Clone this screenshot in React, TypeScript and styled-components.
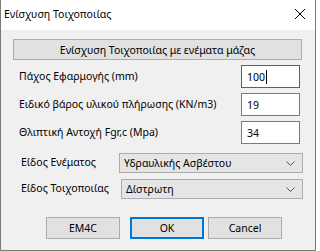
import styled, { createGlobalStyle } from "styled-components";

const GlobalStyle = createGlobalStyle`
    html, body {
        margin: 0;
        padding: 0;
        background: #ffffff;
    }
    * {
        box-sizing: border-box;
    }
`;

const Window = styled.div`
    width: 316px;
    height: 251px;
    display: flex;
    flex-direction: column;
    background: #f0f0f0;
    border: 1px solid #7b7b7b;
    border-top: none;
    font-family: "Noto Sans", "Liberation Sans", sans-serif;
    font-size: 10.5px;
    color: #000;
    overflow: hidden;
`;

const TitleBar = styled.div`
    height: 30px;
    flex: none;
    display: flex;
    align-items: center;
    justify-content: space-between;
    background: #ffffff;
    padding: 0 9px 2px 3px;
`;

const Title = styled.span`
    font-size: 10.5px;
`;

const CloseIcon = styled.svg`
    width: 12px;
    height: 12px;
`;

const WideButton = styled.button`
    margin: 9px 13px 0 12px;
    height: 21px;
    flex: none;
    background: #e1e1e1;
    border: 1px solid #adadad;
    font: inherit;
    color: inherit;
    padding: 0;
`;

const Fields = styled.div`
    display: grid;
    grid-template-columns: 1fr 59px;
    grid-auto-rows: 23px;
    row-gap: 5px;
    align-items: center;
    margin-top: 5px;
    padding: 0 15px 0 18px;
`;

const Label = styled.span`
    white-space: nowrap;
    line-height: 16px;
    margin-top: -2px;
`;

const TextBox = styled.div<{ $focused?: boolean }>`
    height: 23px;
    display: flex;
    align-items: center;
    padding-left: 5px;
    background: #ffffff;
    border: 1px solid ${(props) => (props.$focused ? "#0078d7" : "#7a7a7a")};
`;

const Caret = styled.span`
    display: inline-block;
    width: 1px;
    height: 14px;
    background: #000;
    margin-left: 1px;
`;

const Choices = styled.div`
    display: grid;
    grid-template-columns: 98px 1fr;
    grid-auto-rows: 20px;
    row-gap: 6px;
    align-items: center;
    margin-top: 9px;
    padding: 0 12px 0 20px;
`;

const ComboBox = styled.div<{ $indent?: number }>`
    height: 20px;
    margin-left: ${(props) => props.$indent ?? 0}px;
    display: flex;
    align-items: center;
    justify-content: space-between;
    padding: 0 7px 0 4px;
    background: #e5e5e5;
    border: 1px solid #adadad;
`;

const Chevron = styled.svg`
    width: 9px;
    height: 5px;
`;

const ButtonRow = styled.div`
    display: flex;
    margin-top: 18px;
    padding-left: 45px;
`;

const DialogButton = styled.button<{ $default?: boolean; $gap?: number }>`
    width: 74px;
    height: 22px;
    margin-right: ${(props) => props.$gap ?? 0}px;
    background: #e1e1e1;
    border: ${(props) => (props.$default ? "2px solid #0078d7" : "1px solid #adadad")};
    font: inherit;
    color: inherit;
    padding: 0;
`;

function App() {
    return (
        <>
            <GlobalStyle />
            <Window>
                <TitleBar>
                    <Title>Ενίσχυση Τοιχοποιίας</Title>
                    <CloseIcon viewBox="0 0 12 12">
                        <path d="M1 1 L11 11 M11 1 L1 11" stroke="#000" strokeWidth="1" fill="none" />
                    </CloseIcon>
                </TitleBar>
                <WideButton>Ενίσχυση Τοιχοποιίας με ενέματα μάζας</WideButton>
                <Fields>
                    <Label>Πάχος Εφαρμογής (mm)</Label>
                    <TextBox $focused>
                        100
                        <Caret />
                    </TextBox>
                    <Label>Ειδικό βάρος υλικού πλήρωσης (KN/m3)</Label>
                    <TextBox>19</TextBox>
                    <Label>Θλιπτική Αντοχή Fgr,c (Mpa)</Label>
                    <TextBox>34</TextBox>
                </Fields>
                <Choices>
                    <Label>Είδος Ενέματος</Label>
                    <ComboBox>
                        Υδραυλικής Ασβέστου
                        <Chevron viewBox="0 0 9 5">
                            <path d="M0.5 0.5 L4.5 4.5 L8.5 0.5" stroke="#555" strokeWidth="1" fill="none" />
                        </Chevron>
                    </ComboBox>
                    <Label>Είδος Τοιχοποιίας</Label>
                    <ComboBox $indent={2}>
                        Δίστρωτη
                        <Chevron viewBox="0 0 9 5">
                            <path d="M0.5 0.5 L4.5 4.5 L8.5 0.5" stroke="#555" strokeWidth="1" fill="none" />
                        </Chevron>
                    </ComboBox>
                </Choices>
                <ButtonRow>
                    <DialogButton $gap={10}>EM4C</DialogButton>
                    <DialogButton $default $gap={4}>OK</DialogButton>
                    <DialogButton>Cancel</DialogButton>
                </ButtonRow>
            </Window>
        </>
    );
}

export default App;
